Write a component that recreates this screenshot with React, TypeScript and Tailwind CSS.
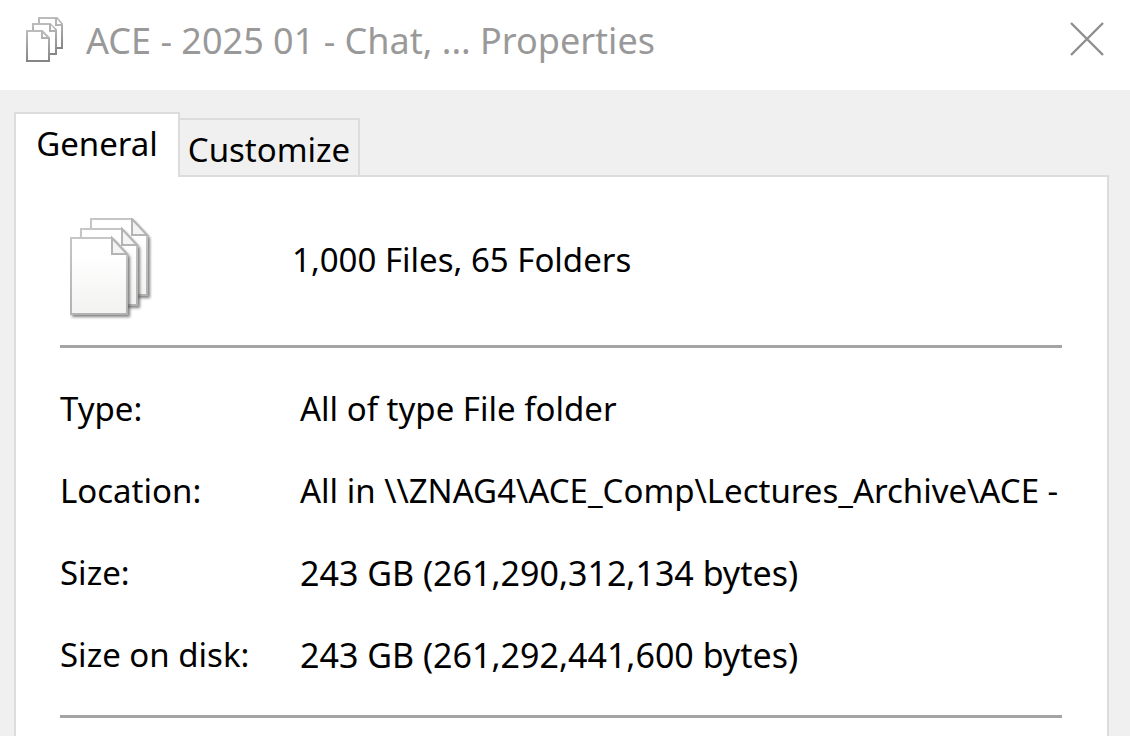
import { useState } from "react";

const details = [
  { label: "Type:", value: "All of type File folder", numeric: false },
  { label: "Location:", value: "All in \\\\ZNAG4\\ACE_Comp\\Lectures_Archive\\ACE -", numeric: false },
  { label: "Size:", value: "243 GB (261,290,312,134 bytes)", numeric: true },
  { label: "Size on disk:", value: "243 GB (261,292,441,600 bytes)", numeric: true },
];

function SmallFilesIcon() {
  return (
    <svg width="40" height="48" viewBox="0 0 40 48" fill="#fff" strokeWidth="2" aria-hidden="true">
      <defs>
        <linearGradient id="edge" x1="0" y1="0" x2="0" y2="1">
          <stop offset="0" stopColor="#bcbcbc" />
          <stop offset="1" stopColor="#858585" />
        </linearGradient>
      </defs>
      <path d="M15 2H33L38 8V32H15Z" stroke="url(#edge)" />
      <path d="M32 2V9H38" stroke="#b4b4b4" />
      <path d="M9 8H26L32 14V38H9Z" stroke="url(#edge)" />
      <path d="M26 8V15H32" stroke="#b0b0b0" />
      <path d="M3 15H18V22H25V45H3Z" stroke="url(#edge)" />
      <path d="M18 15L25 22" stroke="#b8b8b8" strokeWidth="2" />
    </svg>
  );
}

function Sheet({ x, y }: { x: number; y: number }) {
  return (
    <g transform={`translate(${x} ${y})`}>
      <path d="M2 3H44L60 20V80H2Z" fill="#555" filter="url(#soft)" opacity="0.75" />
      <path d="M1 1H42L57 17V77H1Z" fill="url(#paper)" stroke="url(#rim)" strokeWidth="2" />
      <path d="M42 1V17H57Z" fill="#f4f4f4" stroke="#b4b4b4" strokeWidth="2" />
    </g>
  );
}

function LargeFilesIcon() {
  return (
    <svg width="86" height="106" viewBox="0 0 86 106" aria-hidden="true">
      <defs>
        <linearGradient id="paper" x1="0" y1="0" x2="0" y2="1">
          <stop offset="0.2" stopColor="#ffffff" />
          <stop offset="1" stopColor="#f2f2f1" />
        </linearGradient>
        <linearGradient id="rim" x1="0" y1="0" x2="0" y2="1">
          <stop offset="0" stopColor="#c6c6c6" />
          <stop offset="1" stopColor="#b2b2b2" />
        </linearGradient>
        <filter id="soft" x="-20%" y="-20%" width="140%" height="140%">
          <feGaussianBlur stdDeviation="1.4" />
        </filter>
      </defs>
      <Sheet x={20} y={0} />
      <Sheet x={10} y={10} />
      <Sheet x={0} y={19} />
    </svg>
  );
}

export default function App() {
  const [tab, setTab] = useState("General");
  return (
    <main className="flex min-h-screen flex-col bg-[#f0f0f0] font-['Noto_Sans',sans-serif] text-[33px] leading-[42px] text-black">
      <header className="flex h-[90px] items-start bg-white pt-4 pr-[22px] pl-6">
        <SmallFilesIcon />
        <h1 className="ml-[22px] flex-1 pt-1 text-[36px] text-[#999999]">ACE - 2025 01 - Chat, ... Properties</h1>
        <button type="button" aria-label="Close" className="mt-[2px] p-1">
          <svg width="34" height="34" viewBox="0 0 34 34" stroke="#8e8e8e" strokeWidth="2.4" aria-hidden="true">
            <path d="M1 1L33 33M33 1L1 33" />
          </svg>
        </button>
      </header>
      <div className="flex flex-1 flex-col pt-[22px] pr-[21px] pl-[14px]">
        <div role="tablist" className="relative -mb-[2px] flex items-end">
          <button
            type="button"
            role="tab"
            aria-selected={tab === "General"}
            onClick={() => setTab("General")}
            className="h-[65px] w-[166px] border-2 border-b-0 border-[#dcdcdc] bg-white pb-1"
          >
            General
          </button>
          <button
            type="button"
            role="tab"
            aria-selected={tab === "Customize"}
            onClick={() => setTab("Customize")}
            className="h-[59px] w-[180px] border-2 border-l-0 border-[#dcdcdc] bg-[#f0f0f0] pt-1"
          >
            Customize
          </button>
        </div>
        <section role="tabpanel" className="flex-1 border-2 border-b-0 border-[#dcdcdc] bg-white pt-[41px] pr-[45px] pl-11">
          <div className="flex h-[130px] items-start border-b-[3px] border-[#a4a4a4] pl-[10px]">
            <LargeFilesIcon />
            <p className="ml-[136px] pt-[21px]">1,000 Files, 65 Folders</p>
          </div>
          <dl className="grid h-[370px] grid-cols-[240px_1fr] content-start gap-y-10 border-b-[3px] border-[#a4a4a4] pt-10">
            {details.map((d) => (
              <div key={d.label} className="contents">
                <dt className="whitespace-nowrap">{d.label}</dt>
                <dd className={d.numeric ? "whitespace-nowrap text-[34px]" : "whitespace-nowrap"}>{d.value}</dd>
              </div>
            ))}
          </dl>
        </section>
      </div>
    </main>
  );
}
